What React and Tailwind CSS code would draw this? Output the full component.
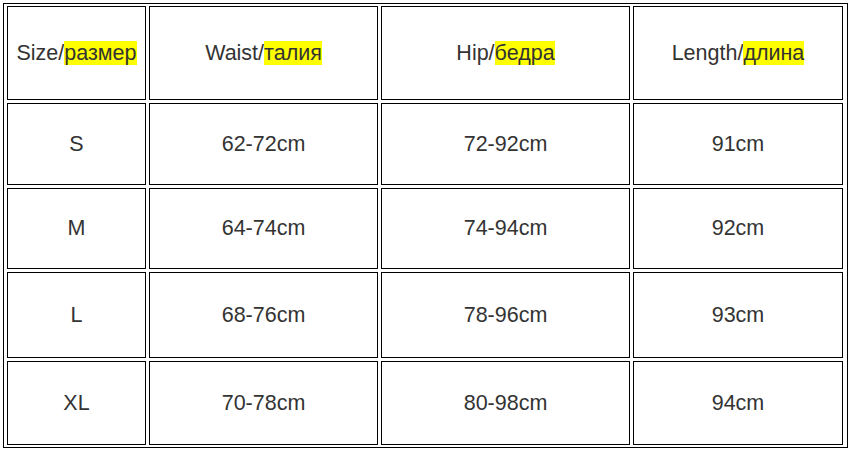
const header = [
    ["Size/", "размер"],
    ["Waist/", "талия"],
    ["Hip/", "бедра"],
    ["Length/", "длина"],
];

const rows = [
    ["S", "62-72cm", "72-92cm", "91cm"],
    ["M", "64-74cm", "74-94cm", "92cm"],
    ["L", "68-76cm", "78-96cm", "93cm"],
    ["XL", "70-78cm", "80-98cm", "94cm"],
];

export default function App() {
    return (
        <div className="w-[850px] h-[452px] bg-white pt-[3px] pl-[3px] font-['Liberation_Sans',Arial,sans-serif] text-[21.5px] text-[#333]">
            <div className="w-[845px] border border-black px-[3px] py-[2px]">
                <div className="grid grid-cols-[139px_229px_249px_210px] grid-rows-[94px_82px_81px_86px_84px] gap-[3px]">
                    {/* header row */}
                    {header.map(([en, ru]) => (
                        <div key={en} className="border border-black flex items-center justify-center">
                            <span>
                                {en}
                                <span className="bg-[#ffff00]">{ru}</span>
                            </span>
                        </div>
                    ))}
                    {/* size rows */}
                    {rows.map((row) =>
                        row.map((cell, i) => (
                            <div key={row[0] + i} className="border border-black flex items-center justify-center">
                                {cell}
                            </div>
                        ))
                    )}
                </div>
            </div>
        </div>
    );
}
